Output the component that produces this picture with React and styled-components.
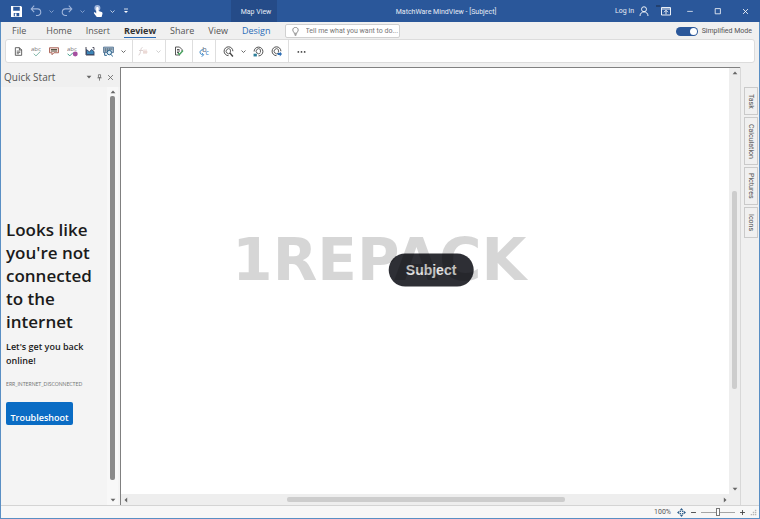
import React, { useState } from 'react';
import styled, { createGlobalStyle } from 'styled-components';

const colors = {
	blue: '#2a579a',
	blueDark: '#254b88',
	chrome: '#f0f0f0',
	line: '#d4d4d4',
	frame: '#808080',
	text: '#555555',
	accent: '#0a6cc4',
};

//Icons
const Svg = ({ size = 10, children, ...rest }) => (
	<svg width={size} height={size} viewBox="0 0 20 20" fill="none" stroke="#444" strokeWidth="1.8" aria-hidden="true" {...rest}>
		{children}
	</svg>
);

const SaveIcon = () => (
	<Svg size={11} stroke="none">
		<path fill="#fff" fillRule="evenodd" d="M0 0h18l2 2v18H0zM4 1.500v7h12v-7zM5 12.500v6h10v-6z" />
		<path fill="#fff" d="M7 13.500h3v5H7z" />
	</Svg>
);
const UndoIcon = () => (
	<Svg size={12} stroke="#9fb5db">
		<path d="M7 1 2 6.500 7 12M2 6.500h10.500c7 0 7.500 11 0 11H10" />
	</Svg>
);
const RedoIcon = () => (
	<Svg size={12} stroke="#9fb5db">
		<path d="m13 1 5 5.500-5 5.500M18 6.500H7.500c-7 0-7.500 11 0 11H10" />
	</Svg>
);
const TouchIcon = () => (
	<Svg size={12} stroke="none">
		<circle cx="9" cy="5" r="5" fill="#9fb5db" />
		<path fill="#fff" d="M7 5c0-2.500 4-2.500 4 0v5l5 1.500c1.500.500 1.500 1.500 1.500 3L16 20H8l-4.500-6c-1-1.500.500-2.500 2-1.500L7 14z" />
	</Svg>
);
const CustomizeIcon = () => (
	<Svg size={8} stroke="#fff">
		<path d="M5 5h10" strokeWidth="2" />
		<path d="M5 10h10l-5 5z" fill="#fff" stroke="none" />
	</Svg>
);
const Chevron = ({ color = '#555' }) => (
	<Svg size={5} stroke={color} strokeWidth="3.500">
		<path d="m2 6 8 8 8-8" />
	</Svg>
);
const PersonIcon = () => (
	<Svg stroke="#fff">
		<circle cx="10" cy="6.500" r="5" />
		<path d="M2 20c0-11 16-11 16 0" />
	</Svg>
);
const RibbonIcon = () => (
	<Svg stroke="#fff" overflow="visible">
		<path d="M-10-1h9v2h-9z" fill="#1b2a45" stroke="none" />
		<path d="M1 3h18v15H1zM1 6h18" />
		<path d="M10 16.500V9M6 12.500l4-4 4 4" />
	</Svg>
);
const MinimizeIcon = () => (
	<Svg size={8} stroke="#fff">
		<path d="M3 11h14" />
	</Svg>
);
const MaximizeIcon = () => (
	<Svg size={8} stroke="#fff" strokeWidth="2">
		<path d="M3 4h13v13H3z" />
	</Svg>
);
const CloseIcon = ({ color = '#fff', size = 7 }) => (
	<Svg size={size} stroke={color} strokeWidth="2.400">
		<path d="m3 3 14 14M17 3 3 17" />
	</Svg>
);
const BulbIcon = () => (
	<Svg size={9} stroke="#666" strokeWidth="1.600">
		<path d="M7 14c0-3-3-3.500-3-7.500C4-1 16-1 16 6.500c0 4-3 4.500-3 7.500zM7.500 17h5M8.500 19.500h3" />
	</Svg>
);
const PageIcon = () => (
	<Svg size={9}>
		<path d="M3 1.500h9l5 5v12H3zM12 1.500v5h5" />
		<path d="M6 9h8M6 12h8M6 15h5" strokeWidth="1.600" />
	</Svg>
);
const SvgText = styled.text`
	font-family: 'Open Sans', sans-serif;
	font-size: ${(props) => props.$size || 11}px;
	stroke: none;
`;
const SpellIcon = () => (
	<Svg size={11}>
		<SvgText x="0" y="9" fill="#777">abc</SvgText>
		<path d="m5 14 4 4 8-8" stroke="#7fb5a8" />
	</Svg>
);
const CommentIcon = () => (
	<Svg>
		<path d="M1 3.500h18v10h-9l-4 4v-4H1z" stroke="#a65c50" fill="#f2dfdb" />
		<path d="M4 7h12M4 10h12" stroke="#554" strokeWidth="2.200" />
	</Svg>
);
const SpellDotIcon = () => (
	<Svg size={11}>
		<SvgText x="0" y="9" fill="#777">abc</SvgText>
		<path d="m1 14 4 4 6-6" stroke="#3b9c86" />
		<circle cx="15" cy="14.500" r="4.500" fill="#a54fa0" stroke="none" />
	</Svg>
);
const ImageMarkIcon = () => (
	<Svg>
		<path d="M2 2v16h17" stroke="#334" />
		<path d="M3 17V7l6 5 4-5 5 4v6z" fill="#3d87b8" stroke="#346" />
		<path d="M15 3h3v5" stroke="#445" />
	</Svg>
);
const SearchTextIcon = () => (
	<Svg size={11}>
		<path d="M1 2h18v10H1z" fill="#a9c0d1" stroke="#468" strokeWidth="1.400" />
		<path d="M3 5.500h14M3 9h8" stroke="#345" strokeDasharray="3 1" />
		<circle cx="11.500" cy="12" r="4" fill="#d7eaf5" stroke="#27618c" />
		<path d="m14 15 4 4M3 12v5h4" stroke="#27618c" />
	</Svg>
);
const FormulaIcon = () => (
	<Svg stroke="#d8cdcd">
		<path d="M1 18c5 1 3-15 8-15M2 9h8" />
		<path d="M12 7v9M16 7v9M10 12h9" stroke="#e3c9c4" />
	</Svg>
);
const PageCheckIcon = () => (
	<Svg>
		<path d="M12 18H3V2h8l5 5v3M6 7h5M6 10h6M6 13h4" />
		<path d="m8 14 3 3 7-8" stroke="#45a05c" strokeWidth="2.800" />
	</Svg>
);
const ReplaceIcon = () => (
	<Svg size={11} overflow="visible">
		<path d="M8 7c-8-1-8 9-1 9M5 12.500 8.500 16 5 19.500" stroke="#3b86c4" />
		<SvgText x="6" y="11" $size={13} fill="#58677c">b</SvgText>
		<SvgText x="12" y="17" $size={13} fill="#3b86c4">c</SvgText>
	</Svg>
);
const TargetIcon = ({ mark }) => (
	<Svg size={11}>
		<path d={mark === 'back' ? 'M2 10a8 8 0 1 1 8 8' : 'M10 17.500a8 8 0 1 1 8-8'} strokeWidth="1.700" />
		<path d="M13.500 12.500a4.500 4.500 0 1 1 0-6M13.500 6.500v5" strokeWidth="1.500" />
		{mark === 'find' && <path d="m12 12 6 7" strokeWidth="2.600" />}
		{mark === 'back' && <path d="M1 14h6v5H1z" fill="#2d7e99" stroke="none" />}
		{mark === 'next' && <path d="M12 12.500h4V10l4 4.500-4 4.500v-2.500h-4z" fill="#2f6fb5" stroke="none" />}
	</Svg>
);
const DotsIcon = () => (
	<Svg size={9} stroke="none" fill="#444">
		<circle cx="3" cy="11" r="2" />
		<circle cx="10" cy="11" r="2" />
		<circle cx="17" cy="11" r="2" />
	</Svg>
);
const PinIcon = () => (
	<Svg size={7} stroke="#666" strokeWidth="2.200">
		<path d="M7 2h6v8H7zM4 11h12M10 11v8" />
	</Svg>
);
const Triangle = ({ turn = 0, color = '#666' }) => (
	<Svg size={6} stroke="none" fill={color}>
		<path d="M2 6h16l-8 9z" transform={`rotate(${turn} 10 10)`} />
	</Svg>
);
const FitIcon = () => (
	<Svg size={9} stroke="none" fill="#33618c">
		<path d="m10 0 4 5H6zM10 20l4-5H6zM0 10l5-4v8zM20 10l-5-4v8z" />
		<path d="M6 6h3v3H6zM11 6h3v3h-3zM6 11h3v3H6zM11 11h3v3h-3z" />
	</Svg>
);
const GripIcon = () => (
	<Svg size={7} stroke="none" fill="#b5b5b5">
		<path d="M14 2h4v4h-4zM8 8h4v4H8zM14 8h4v4h-4zM2 14h4v4H2zM8 14h4v4H8zM14 14h4v4h-4z" />
	</Svg>
);

const TABS = ['File', 'Home', 'Insert', 'Review', 'Share', 'View', 'Design'];
const SIDE_TABS = [
	{ name: 'Task', size: 28 },
	{ name: 'Calculation', size: 48 },
	{ name: 'Pictures', size: 38 },
	{ name: 'Icons', size: 31 },
];

const TOOLS = [
	{
		pad: 3,
		items: [
			['Notes', <PageIcon />],
			['Spelling', <SpellIcon />],
			['Comment', <CommentIcon />],
			['Proofing', <SpellDotIcon />],
			['Chart', <ImageMarkIcon />],
			['Lookup', <SearchTextIcon />],
			['More lookup', null],
		],
	},
	{ pad: 1, items: [['Formula', <FormulaIcon />], ['More formulas', null, '#c8c8c8']] },
	{ pad: 4, items: [['Accept', <PageCheckIcon />]] },
	{ pad: 2, items: [['Replace', <ReplaceIcon />]] },
	{
		pad: 3,
		items: [
			['Find', <TargetIcon mark="find" />],
			['More find', null],
			['Previous', <TargetIcon mark="back" />],
			['Next', <TargetIcon mark="next" />],
		],
	},
	{ pad: 3, items: [['More commands', <DotsIcon />]] },
];

function ScrollBar({ vertical, start, size, end, thumb, dark }) {
	return (
		<Bar $vertical={vertical} $dark={dark}>
			<Triangle turn={vertical ? 180 : 90} />
			<Track $vertical={vertical}>
				<Space $grow={start} />
				<Thumb $grow={size} $color={thumb} />
				<Space $grow={end} />
			</Track>
			<Triangle turn={vertical ? 0 : 270} />
		</Bar>
	);
}

function App() {
	const [active, setActive] = useState('Review');
	const [simplified, setSimplified] = useState(true);
	const [zoom, setZoom] = useState(50);

	return (
		<Window>
			<GlobalStyle />
			<TitleBar>
				<QuickAccess>
					<TitleButton $width={23} aria-label="Save"><SaveIcon /></TitleButton>
					<TitleButton $width={16} aria-label="Undo"><UndoIcon /></TitleButton>
					<TitleButton $width={15} aria-label="Undo history"><Chevron color="#8fa8d2" /></TitleButton>
					<TitleButton $width={16} aria-label="Redo"><RedoIcon /></TitleButton>
					<TitleButton $width={15} aria-label="Redo history"><Chevron color="#8fa8d2" /></TitleButton>
					<TitleButton $width={16} aria-label="Touch mode"><TouchIcon /></TitleButton>
					<TitleButton $width={12} aria-label="Touch options"><Chevron color="#d5deee" /></TitleButton>
					<TitleButton $width={15} aria-label="Customize"><CustomizeIcon /></TitleButton>
				</QuickAccess>
				<ContextTab>Map View</ContextTab>
				<Title>MatchWare MindView - [Subject]</Title>
				<Login>Log in <PersonIcon /></Login>
				<TitleButton $width={18} aria-label="Ribbon display"><RibbonIcon /></TitleButton>
				<TitleButton $width={30} aria-label="Minimize"><MinimizeIcon /></TitleButton>
				<TitleButton $width={25} aria-label="Maximize"><MaximizeIcon /></TitleButton>
				<TitleButton $width={30} aria-label="Close"><CloseIcon /></TitleButton>
			</TitleBar>

			<MenuRow>
				{TABS.map((tab) => (
					<MenuTab key={tab} $active={tab === active} $context={tab === 'Design'} onClick={() => setActive(tab)}>
						{tab}
					</MenuTab>
				))}
				<TellMe>
					<BulbIcon />
					<TellMeInput aria-label="Tell me" placeholder="Tell me what you want to do..." />
				</TellMe>
				<Mode>
					<Switch type="checkbox" role="switch" checked={simplified} onChange={() => setSimplified(!simplified)} />
					Simplified Mode
				</Mode>
			</MenuRow>

			<Toolbar>
				{TOOLS.map((group) => (
					<ToolGroup key={group.items[0][0]} $pad={group.pad}>
						{group.items.map(([label, icon, color]) => (
							<ToolButton key={label} aria-label={label} $narrow={!icon}>
								{icon || <Chevron color={color} />}
							</ToolButton>
						))}
					</ToolGroup>
				))}
			</Toolbar>

			<Body>
				<QuickStart>
					<PaneHeader>
						<PaneTitle>Quick Start</PaneTitle>
						<PaneButton aria-label="Pane menu"><Triangle /></PaneButton>
						<PaneButton aria-label="Pin"><PinIcon /></PaneButton>
						<PaneButton aria-label="Close pane"><CloseIcon color="#666" /></PaneButton>
					</PaneHeader>
					<PaneBody>
						<Offline>
							<Headline>Looks like you're not connected to the internet</Headline>
							<Hint>Let's get you back online!</Hint>
							<ErrorCode>ERR_INTERNET_DISCONNECTED</ErrorCode>
							<Troubleshoot>Troubleshoot</Troubleshoot>
						</Offline>
						<ScrollBar vertical start={1} size={383} end={17} thumb="#8a8a8a" />
					</PaneBody>
				</QuickStart>

				<MapFrame>
					<MapRow>
						<Canvas>
							<MapNode>Subject</MapNode>
							<Watermark>1REPACK</Watermark>
						</Canvas>
						<ScrollBar vertical dark start={114} size={195} end={96} thumb="#cdcdcd" />
					</MapRow>
					<ScrollBar dark start={157} size={276} end={156} thumb="#cdcdcd" />
				</MapFrame>

				<SideTabs>
					{SIDE_TABS.map(({ name, size }) => (
						<SideTab key={name} $size={size}>{name}</SideTab>
					))}
				</SideTabs>
			</Body>

			<StatusBar>
				<ZoomValue>100%</ZoomValue>
				<StatusButton aria-label="Fit map"><FitIcon /></StatusButton>
				<StatusButton aria-label="Zoom out" onClick={() => setZoom(Math.max(0, zoom - 10))}>
					<Svg size={7} strokeWidth="2.600"><path d="M3 10h14" /></Svg>
				</StatusButton>
				<ZoomSlider type="range" aria-label="Zoom" value={zoom} onChange={(e) => setZoom(Number(e.target.value))} />
				<StatusButton aria-label="Zoom in" onClick={() => setZoom(Math.min(100, zoom + 10))}>
					<Svg size={7} strokeWidth="2.600"><path d="M3 10h14M10 3v14" /></Svg>
				</StatusButton>
				<GripIcon />
			</StatusBar>
		</Window>
	);
}

export default App;

const GlobalStyle = createGlobalStyle`
	* {
		box-sizing: border-box;
	}
	body {
		margin: 0;
		overflow: hidden;
		font-family: Roboto, 'Open Sans', sans-serif;
		font-size: 7px;
		color: ${colors.text};
	}
	button, input {
		font: inherit;
		color: inherit;
		border: 0;
		padding: 0;
		margin: 0;
		background: none;
	}
	svg {
		display: block;
		flex: none;
	}
`;

const Window = styled.div`
	display: flex;
	flex-direction: column;
	height: 100vh;
	background-color: ${colors.chrome};
	border: solid #5a8fc4;
	border-width: 0 1px 1px;
`;

const TitleBar = styled.header`
	display: flex;
	align-items: stretch;
	height: 22px;
	flex: none;
	background-color: ${colors.blue};
	color: #e6ecf5;
	margin: 0 -1px;
`;

const TitleButton = styled.button`
	width: ${(props) => props.$width}px;
	display: flex;
	align-items: center;
	justify-content: center;
`;

const QuickAccess = styled.div`
	display: flex;
	width: 231px;
	padding-left: 5px;
`;

const ContextTab = styled.button`
	width: 46px;
	padding-top: 2px;
	padding-left: 4px;
	background-color: ${colors.blueDark};
`;

const Title = styled.div`
	flex: 1;
	text-align: center;
	line-height: 24px;
`;

const Login = styled.button`
	display: flex;
	align-items: center;
	gap: 5px;
	padding-right: 8px;
`;

const MenuRow = styled.nav`
	display: flex;
	align-items: center;
	height: 18px;
	flex: none;
	gap: 14px;
	padding: 0 7px 0 11px;
`;

const MenuTab = styled.button`
	height: 14px;
	font-family: 'Open Sans', sans-serif;
	font-size: 9px;
	line-height: 12px;
	font-weight: ${(props) => (props.$active ? 700 : 400)};
	color: ${(props) => (props.$context ? '#2b6cb8' : props.$active ? '#333' : colors.text)};
	border-bottom: 1px solid ${(props) => (props.$active ? '#2b6cb8' : 'transparent')};
	&:first-child {
		padding-right: 6px;
	}
`;

const TellMe = styled.label`
	display: flex;
	align-items: center;
	gap: 6px;
	width: 115px;
	height: 14px;
	padding-left: 5px;
	background-color: #fff;
	border: 1px solid #d0d0d0;
	border-radius: 2px;
`;

const TellMeInput = styled.input`
	flex: 1;
	min-width: 0;
	&::placeholder {
		color: #777;
	}
`;

const Mode = styled.label`
	display: flex;
	align-items: center;
	gap: 4px;
	margin-left: auto;
`;

const Switch = styled.input`
	appearance: none;
	display: flex;
	align-items: center;
	justify-content: ${(props) => (props.checked ? 'flex-end' : 'flex-start')};
	width: 22px;
	height: 9px;
	border-radius: 5px;
	background-color: ${colors.blue};
	&::after {
		content: '';
		width: 7px;
		height: 7px;
		margin: 1px;
		border-radius: 50%;
		background-color: #fff;
	}
`;

const Toolbar = styled.div`
	display: flex;
	height: 24px;
	flex: none;
	margin: -1px 4px 4px;
	background-color: #fff;
	border: 1px solid #dcdcdc;
	border-radius: 3px;
`;

const ToolGroup = styled.div`
	display: flex;
	padding: 0 ${(props) => props.$pad}px;
	border-right: 1px solid #dedede;
	&:last-child {
		border-right: 0;
	}
`;

const ToolButton = styled.button`
	width: ${(props) => (props.$narrow ? 12 : 18)}px;
	display: flex;
	align-items: center;
	justify-content: center;
`;

const Body = styled.main`
	display: flex;
	flex: 1;
	min-height: 0;
`;

const QuickStart = styled.aside`
	display: flex;
	flex-direction: column;
	width: 119px;
	flex: none;
	font-family: 'Open Sans', sans-serif;
`;

const PaneHeader = styled.div`
	display: flex;
	align-items: center;
	height: 20px;
	padding: 0 4px 0 3px;
`;

const PaneTitle = styled.h2`
	flex: 1;
	margin: 0;
	font-size: 10px;
	font-weight: 400;
`;

const PaneButton = styled.button`
	display: flex;
	justify-content: center;
	width: 11px;
`;

const PaneBody = styled.div`
	display: flex;
	flex: 1;
	min-height: 0;
	padding-right: 2px;
	background-color: #f4f4f4;
`;

const Offline = styled.section`
	flex: 1;
	display: flex;
	flex-direction: column;
	align-items: flex-start;
	justify-content: center;
	padding: 51px 5px 0;
	color: #1b1b1b;
`;

const Headline = styled.h1`
	margin: 0 0 7px;
	font-size: 17px;
	line-height: 23px;
	font-weight: 600;
`;

const Hint = styled.p`
	margin: 0 0 11px;
	font-size: 9px;
	line-height: 14px;
	font-weight: 600;
`;

const ErrorCode = styled.p`
	margin: 0 0 13px;
	font-family: Lato, sans-serif;
	font-size: 5px;
	line-height: 10px;
	color: #777;
`;

const Troubleshoot = styled.button`
	width: 67px;
	height: 23px;
	padding-top: 8px;
	border-radius: 2px;
	background-color: ${colors.accent};
	color: #fff;
	font-size: 9px;
	font-weight: 600;
`;

const MapFrame = styled.section`
	display: flex;
	flex-direction: column;
	flex: 1;
	min-width: 0;
	border: solid ${colors.frame};
	border-width: 1px 0 0 1px;
`;

const MapRow = styled.div`
	display: flex;
	flex: 1;
	min-height: 0;
`;

const Canvas = styled.div`
	position: relative;
	flex: 1;
	overflow: hidden;
	background-color: #fff;
`;

const MapNode = styled.div`
	position: absolute;
	left: 51%;
	top: 47.5%;
	transform: translate(-50%, -50%);
	padding: 0 17px;
	border-radius: 17px;
	background-color: #2e2f35;
	color: #e2e2e2;
	font: bold 14px/33px 'Liberation Sans', sans-serif;
`;

const Watermark = styled.div`
	position: absolute;
	left: 42.5%;
	top: 45%;
	transform: translate(-50%, -50%);
	color: rgba(0, 0, 0, 0.16);
	font: bold 58px/60px 'DejaVu Sans', sans-serif;
	pointer-events: none;
`;

const Bar = styled.div`
	display: flex;
	flex-direction: ${(props) => (props.$vertical ? 'column' : 'row')};
	align-items: center;
	flex: none;
	${(props) => (props.$vertical ? 'width: 11px; padding: 2px 0;' : 'height: 11px; padding: 0 12px 0 2px;')}
	background-color: ${(props) => (props.$dark ? '#eeeeee' : '#f8f8f8')};
`;

const Track = styled.div`
	display: flex;
	flex: 1;
	flex-direction: ${(props) => (props.$vertical ? 'column' : 'row')};
	${(props) => (props.$vertical ? 'width: 5px;' : 'height: 5px;')}
`;

const Space = styled.div`
	flex: ${(props) => props.$grow} 1 0;
`;

const Thumb = styled.div`
	flex: ${(props) => props.$grow} 1 0;
	border-radius: 2px;
	background-color: ${(props) => props.$color};
`;

const SideTabs = styled.div`
	display: flex;
	flex-direction: column;
	align-items: flex-end;
	gap: 2px;
	width: 19px;
	padding: 20px 1px 0 0;
	border-left: 1px solid #d8d8d8;
`;

const SideTab = styled.button`
	writing-mode: vertical-rl;
	width: 14px;
	height: ${(props) => props.$size}px;
	border: 1px solid #cacaca;
`;

const StatusBar = styled.footer`
	display: flex;
	align-items: center;
	justify-content: flex-end;
	gap: 4px;
	height: 13px;
	flex: none;
	padding-right: 2px;
	background-color: #f7f7f7;
	border-top: 1px solid ${colors.line};
`;

const ZoomValue = styled.span`
	padding-right: 2px;
`;

const StatusButton = styled.button`
	display: flex;
`;

const ZoomSlider = styled.input`
	appearance: none;
	width: 34px;
	height: 9px;
	background: linear-gradient(#a5a5a5, #a5a5a5) center / 100% 1px no-repeat;
	&::-webkit-slider-thumb {
		appearance: none;
		width: 4px;
		height: 8px;
		background-color: #fff;
		border: 1px solid #777;
	}
`;
